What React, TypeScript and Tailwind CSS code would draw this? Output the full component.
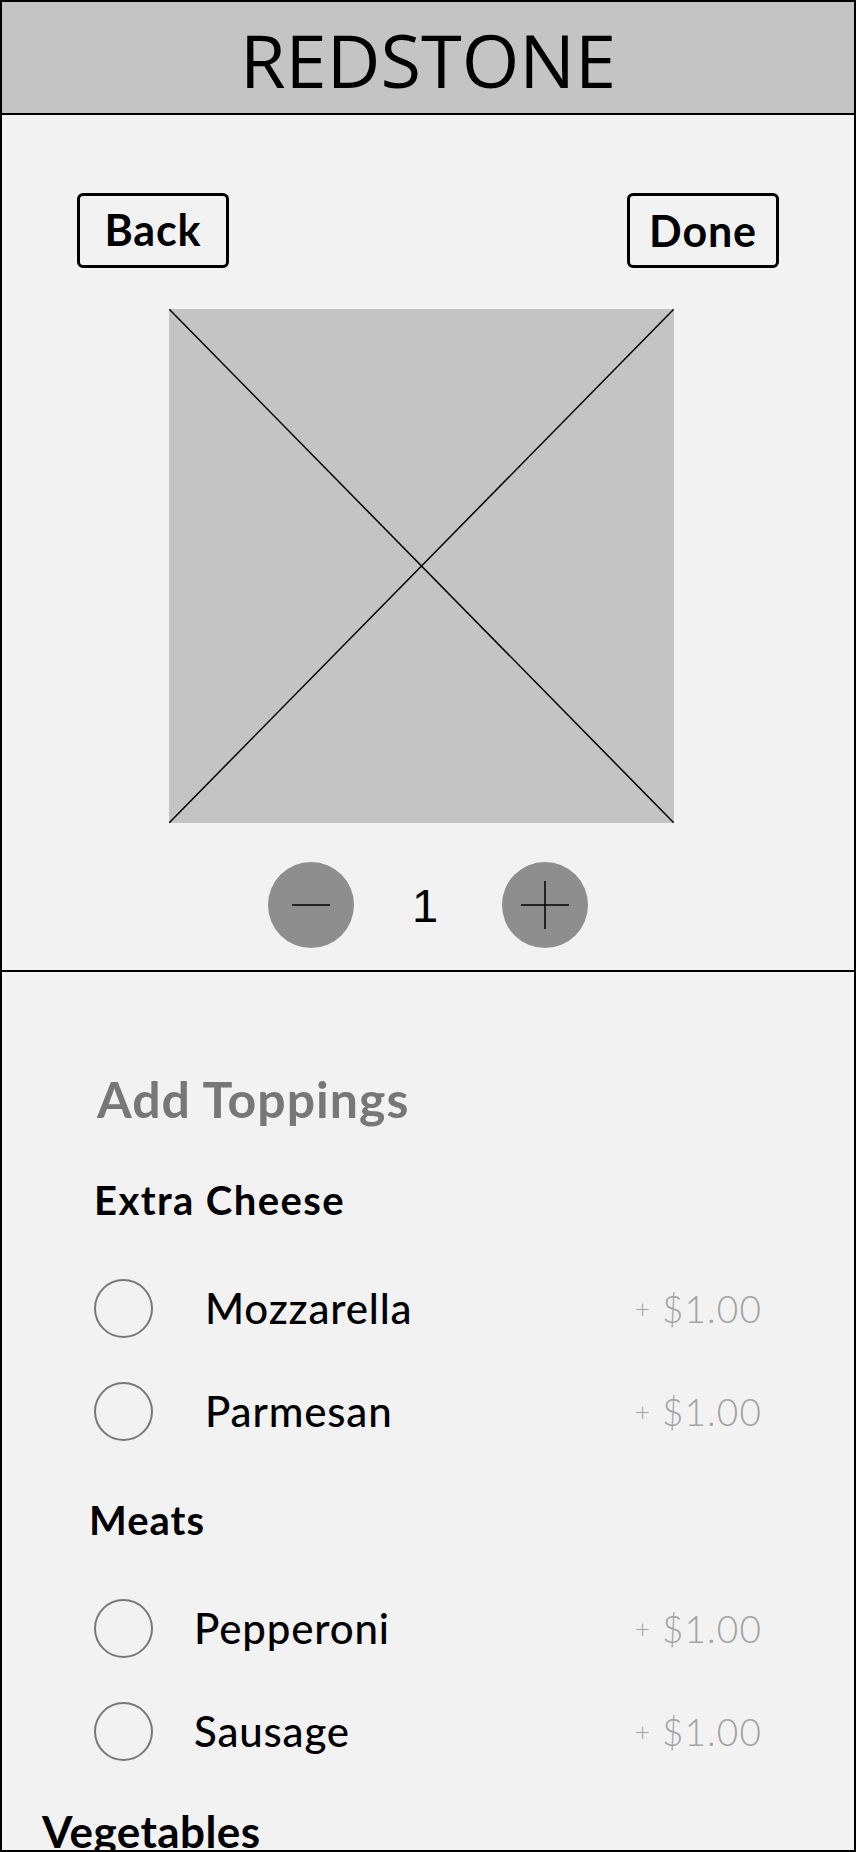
import React from "react";

const toppings = [
  {
    title: "Extra Cheese",
    titleClass: "ml-[92px] mt-[56px] tracking-[0.035em]",
    items: [
      { name: "Mozzarella", gap: "ml-[52px]" },
      { name: "Parmesan", gap: "ml-[52px]" },
    ],
  },
  {
    title: "Meats",
    titleClass: "ml-[87px] mt-[59px] tracking-[0.025em]",
    items: [
      { name: "Pepperoni", gap: "ml-[41px]" },
      { name: "Sausage", gap: "ml-[41px]" },
    ],
  },
];

function ToppingRow({ name, gap, first }: { name: string; gap: string; first: boolean }) {
  return (
    <div className={`flex items-center h-[60px] pl-[92px] pr-[92px] ${first ? "mt-[58px]" : "mt-[43px]"}`}>
      <div className="w-[59px] h-[59px] rounded-full border-2 border-[#777777] shrink-0" />
      <span className={`${gap} text-[42px] leading-none font-medium tracking-[0.02em] text-black`}>{name}</span>
      <span className="ml-auto flex items-center text-[#a3a3a3] font-light leading-none">
        <span className="text-[26px] mr-[12px]">+</span>
        <span className="text-[37px] tracking-[0.03em]">$1.00</span>
      </span>
    </div>
  );
}

export default function App() {
  return (
    <div
      className="w-[856px] h-[1852px] border-2 border-black bg-[#f2f2f2] overflow-hidden flex flex-col"
      style={{ fontFamily: "Lato, 'Open Sans', sans-serif" }}
    >
      {/* Header */}
      <header className="h-[113px] shrink-0 bg-[#c4c4c4] border-b-2 border-black flex items-center justify-center pt-[4px]">
        <h1
          className="text-[74px] font-normal leading-none text-black"
          style={{ fontFamily: "'Open Sans', sans-serif" }}
        >
          REDSTONE
        </h1>
      </header>

      {/* Product */}
      <section className="h-[857px] shrink-0 border-b-2 border-black flex flex-col">
        <div className="flex justify-between px-[75px] pt-[78px]">
          <button className="w-[152px] h-[75px] border-[3px] border-black rounded-[6px] flex items-center justify-center pb-[3px] text-[43px] font-bold leading-none tracking-[0.02em] text-black">
            Back
          </button>
          <button className="w-[152px] h-[75px] border-[3px] border-black rounded-[6px] flex items-center justify-center text-[43px] font-bold leading-none tracking-[0.02em] text-black">
            Done
          </button>
        </div>

        <div className="ml-[167px] mt-[41px] w-[505px] h-[514px] bg-[#c4c4c4]">
          <svg width="505" height="514" viewBox="0 0 505 514" className="block">
            <line x1="0" y1="0" x2="505" y2="514" stroke="black" strokeWidth="1.5" />
            <line x1="505" y1="0" x2="0" y2="514" stroke="black" strokeWidth="1.5" />
          </svg>
        </div>

        <div className="mt-[39px] flex justify-center items-center">
          <button className="w-[86px] h-[86px] rounded-full bg-[#8e8e8e]">
            <svg width="86" height="86" viewBox="0 0 86 86" className="block">
              <line x1="24" y1="43" x2="62" y2="43" stroke="black" strokeWidth="1.5" />
            </svg>
          </button>
          <div
            className="w-[148px] text-center text-[47px] leading-none text-black pr-[6px]"
            style={{ fontFamily: "'Liberation Sans', Arial, sans-serif" }}
          >
            1
          </div>
          <button className="w-[86px] h-[86px] rounded-full bg-[#8e8e8e]">
            <svg width="86" height="86" viewBox="0 0 86 86" className="block">
              <line x1="19" y1="43" x2="67" y2="43" stroke="black" strokeWidth="1.5" />
              <line x1="43" y1="19" x2="43" y2="67" stroke="black" strokeWidth="1.5" />
            </svg>
          </button>
        </div>
      </section>

      {/* Toppings */}
      <section className="flex flex-col pt-[102px]">
        <h2 className="ml-[95px] text-[50px] leading-none font-bold tracking-[0.02em] text-[#777777]">Add Toppings</h2>

        {toppings.map((group) => (
          <div key={group.title} className="flex flex-col">
            <h3 className={`${group.titleClass} text-[40px] leading-none font-bold text-black`}>
              {group.title}
            </h3>
            {group.items.map((item, i) => (
              <ToppingRow key={item.name} name={item.name} gap={item.gap} first={i === 0} />
            ))}
          </div>
        ))}

        <h3 className="ml-[40px] mt-[48px] text-[44px] leading-none font-bold tracking-[0.01em] text-black">Vegetables</h3>
      </section>
    </div>
  );
}
